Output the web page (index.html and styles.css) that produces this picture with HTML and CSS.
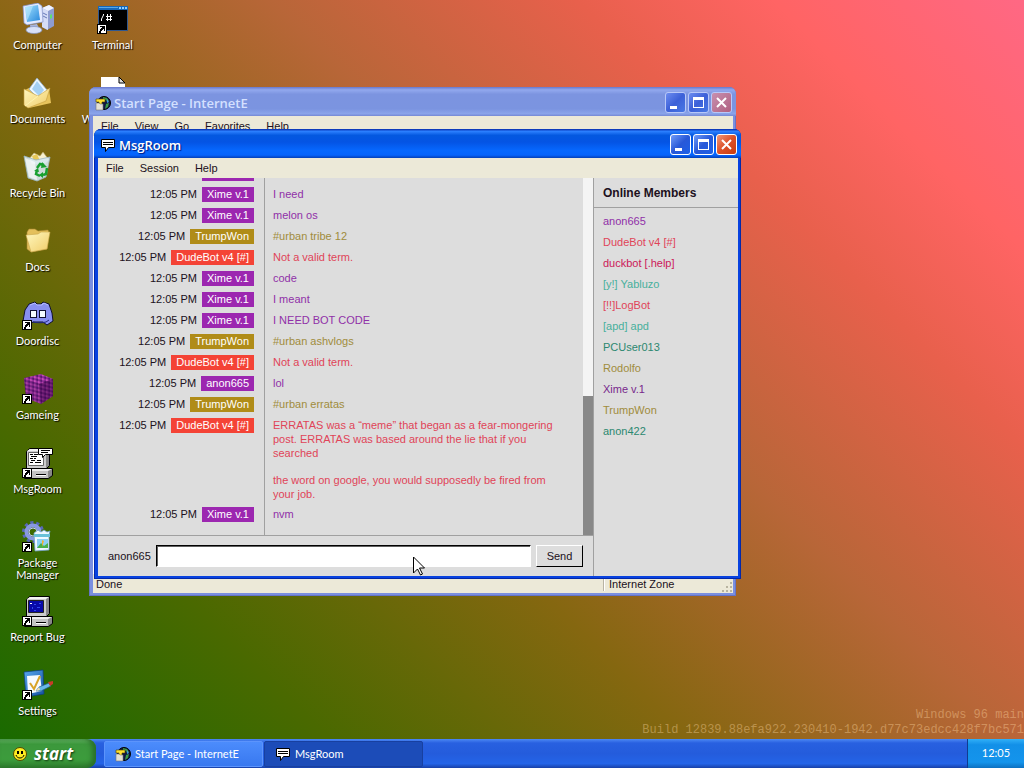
FILE: index.html
```html
<!DOCTYPE html>
<html lang="en">
<head>
  <meta charset="UTF-8" />
  <title>Windows 96</title>
  <meta name="viewport" content="width=device-width, initial-scale=1.0" />
  <link rel="stylesheet" href="styles.css">
</head>
<body>
  <svg class="sprites" aria-hidden="true">
    <defs>
      <linearGradient id="folder" x1="0" y1="0" x2="1" y2="1">
        <stop offset="0" stop-color="#fff8c0"/><stop offset="1" stop-color="#f0cc68"/>
      </linearGradient>
      <linearGradient id="screen" x1="0" y1="0" x2="1" y2="1">
        <stop offset="0" stop-color="#a5e4ff"/><stop offset="1" stop-color="#2888dc"/>
      </linearGradient>
      <linearGradient id="cover" x1="0" y1="0" x2="1" y2="1">
        <stop offset="0" stop-color="#58a8f0"/><stop offset="1" stop-color="#1450a0"/>
      </linearGradient>
      <pattern id="weave" width="4" height="4" patternUnits="userSpaceOnUse" patternTransform="skewY(14)">
        <rect width="4" height="4" fill="#902c98"/>
        <rect width="2" height="2" fill="#c84cb8"/><rect x="2" y="2" width="2" height="2" fill="#5c1870"/>
      </pattern>
      <symbol id="shortcut" viewBox="0 0 10 10">
        <path d="M0 0h10v10H0z" fill="#000"/><path d="M1 1h8v8H1z" fill="#fff"/>
        <path d="M3 2h5v5H7V5H6v1H5v1H4v2H2V7h1V5h1V4h1V3H3z" fill="#000"/>
      </symbol>
      <symbol id="chat" viewBox="0 0 16 16">
        <path d="M1.500 2.500h13v8h-6l-3 4v-4h-4z" fill="#fff" stroke="#000"/>
        <path d="M3 5h10v1H3zM3 7h10v1H3z" fill="#000"/>
      </symbol>
      <symbol id="globe" viewBox="0 0 16 16">
        <circle cx="9" cy="8" r="6.500" fill="#101840" stroke="#000"/>
        <path d="M8 2l4 1 2 3-2 1-1-2-3-1zM11 9l3-1-1 4-3 2z" fill="#3c9a48"/>
        <path d="M12 4l2 3-2 1z" fill="#4098e8"/>
        <path d="M1 4h9v3H7v4H4V7H1z" fill="#ffe030" stroke="#4a4000" stroke-width=".6"/>
        <path d="M1 8h3l1 1h3v6H1z" fill="#e4e0d4" stroke="#777" stroke-width=".6"/>
      </symbol>
      <symbol id="pc" viewBox="0 0 32 32">
        <path d="M4.500 4.500l3-3h20v17l-3 3h-20z" fill="#888" stroke="#000"/>
        <path d="M5 4l3-2h19l-3 2z" fill="#f4f4f4"/><path d="M5 4h19v17H5z" fill="#ccc"/>
        <path d="M2.500 24.500l4-3h24v7l-4 3h-24z" fill="#888" stroke="#000"/>
        <path d="M3 24l4-2h23l-4 2z" fill="#eee"/><path d="M3 24h23v7H3z" fill="#c4c4c4"/>
        <path d="M14 27h10v1H14z" fill="#000"/><path d="M14 28h10v1H14z" fill="#fff"/>
      </symbol>
    </defs>
  </svg>

  <div class="desktop">
    <ul class="icons">
      <li><a class="icon" href="#">
        <svg viewBox="0 0 32 32">
          <path d="M20 5l7-3 5 3v18l-7 4-5-3z" fill="#8e9cd0"/><path d="M20 5l6 3v19l-6-3z" fill="#d5dcf6"/>
          <path d="M20 5l7-3 5 3-6 3z" fill="#f2f4ff"/><path d="M21 10l4 2M21 13l4 2" stroke="#6678b8"/>
          <path d="M28 12l2-1v4l-2 1z" fill="#5fe070"/>
          <path d="M1 3l15-3 4 3 1 16-16 3-3-2z" fill="#e4eaff" stroke="#7c8cc4" stroke-width=".7"/>
          <path d="M3 4l13-2 2 15-13 2z" fill="url(#screen)"/><path d="M3 4l8-1-5 13-1 1z" fill="#c8f0ff" opacity=".5"/>
          <path d="M8 22l7-1 2 4-8 2z" fill="#a8b4dc"/><ellipse cx="12" cy="27" rx="8" ry="3.500" fill="#d8e0f8" stroke="#8090c0" stroke-width=".7"/>
        </svg><span>Computer</span></a></li>
      <li><a class="icon" href="#">
        <svg viewBox="0 0 32 32">
          <path d="M3 13l4-2 20 1 2 14-22 5-3-2z" fill="#e8c45c"/>
          <path d="M7 12L15 1l10 12-8 9z" fill="#eef8ff" stroke="#88a8cc" stroke-width=".7"/>
          <path d="M10 12l5-8 7 9-5 6z" fill="#a4d0f4"/>
          <path d="M2 12l14 7 12-8-4 13-18 7-4-3z" fill="url(#folder)" stroke="#c8a040" stroke-width=".6"/>
          <path d="M3 29l13-10" stroke="#fff4b0"/>
        </svg><span>Documents</span></a></li>
      <li><a class="icon" href="#">
        <svg viewBox="0 0 32 32">
          <path d="M7 8l5-6 6 3 3-4 6 8-5 5-12-1z" fill="#f6f0d0" stroke="#b8a868" stroke-width=".6"/>
          <path d="M10 5l5-2 3 7h-6z" fill="#e6c858"/>
          <path d="M2 5l12 4 14-3-4 20-9 4-9-3z" fill="#d6e8f0" fill-opacity=".9" stroke="#9cb8c4" stroke-width=".8"/>
          <path d="M3 7l10 4 2 18-8-3z" fill="#fff" opacity=".6"/>
          <g fill="none" stroke="#18a030" stroke-width="2.500"><path d="M15 17l3-4 4 1M25 17l-1 6-3 1M18 25l-4-2 1-4"/></g>
          <path d="M20 11l5 5-6 1zM21 21v6l-4-3zM12 20l4-3 1 4z" fill="#18a030"/>
        </svg><span>Recycle Bin</span></a></li>
      <li><a class="icon" href="#">
        <svg viewBox="0 0 32 32">
          <path d="M5 7l2-3 6 0 3 2 10-1 1 3-2 16-16 3-4-3z" fill="#e4c05c" stroke="#a88430" stroke-width=".6"/>
          <path d="M4 10l12-1 3-2 9 0-3 17-16 3z" fill="url(#folder)" stroke="#c8a448" stroke-width=".6"/>
        </svg><span>Docs</span></a></li>
      <li><a class="icon" href="#">
        <svg viewBox="0 0 32 32">
          <path d="M7 5l6-2 2 2h4l2-2 6 2 3 9 1 8-6 4-4-3H11l-4 3-6-4 2-11z" fill="#8890f0" stroke="#101030"/>
          <path d="M8 6l5-2 2 2h5l2-2 4 2" fill="none" stroke="#b4bcff"/>
          <path d="M8 11h7v8H8zM17 11h7v8h-7z" fill="#101030"/><path d="M9 12h5v6H9zM18 12h5v6h-5z" fill="#f4fcff"/>
          <path d="M11 23c4 1 9 1 13 0l3-2" fill="none" stroke="#202880"/>
          <use href="#shortcut" y="21" width="10" height="10"/>
        </svg><span>Doordisc</span></a></li>
      <li><a class="icon" href="#">
        <svg viewBox="0 0 32 32">
          <path d="M2 5l17-4 12 5v17l-12 8L4 25z" fill="url(#weave)"/>
          <path d="M2 5l15 6 2 20L4 25z" fill="#401058" opacity=".25"/><path d="M17 11l14-5v17l-12 8z" fill="#300040" opacity=".5"/>
          <use href="#shortcut" y="21" width="10" height="10"/>
        </svg><span>Gameing</span></a></li>
      <li><a class="icon" href="#">
        <svg viewBox="0 0 32 32">
          <use href="#pc" width="32" height="32"/>
          <path d="M6.500 5.500h15v13h-15z" fill="#fff" stroke="#666"/>
          <path d="M8 7.500h3M12 7.500h4M9 9.500h6M8 11.500h3M12 11.500h2M15 13.500h4M9 13.500h4M8 15.500h3M13 15.500h6" stroke="#000"/>
          <path d="M16.500 1.500h14v6h-7l-3 3v-3h-4z" fill="#fff" stroke="#000"/><path d="M19 3.500h9M19 5.500h7" stroke="#000"/>
          <use href="#shortcut" y="21" width="10" height="10"/>
        </svg><span>MsgRoom</span></a></li>
      <li><a class="icon" href="#">
        <svg viewBox="0 0 32 32">
          <circle cx="11" cy="11" r="9" fill="none" stroke="#5868b8" stroke-width="4" stroke-dasharray="3 2.650"/>
          <circle cx="11" cy="11" r="6.500" fill="none" stroke="#8898e0" stroke-width="4"/>
          <circle cx="11" cy="11" r="4" fill="none" stroke="#c0c8f4" stroke-width="1"/>
          <path d="M12 12l4-3 3 2 3-2 3 2 3-1-1 4v15l-14 1z" fill="#eef8ff" stroke="#70a0c8" stroke-width=".8"/>
          <path d="M12 13h16v3H12z" fill="#68c0d8"/><path d="M15 18h11v9H15z" fill="#8ad0f4"/>
          <path d="M15 27l4-5 3 3 4-3v5z" fill="#48b048"/><path d="M20 19l2 1-2 6z" fill="#f0b030"/>
          <use href="#shortcut" y="21" width="10" height="10"/>
        </svg><span>Package Manager</span></a></li>
      <li><a class="icon" href="#">
        <svg viewBox="0 0 32 32">
          <use href="#pc" width="32" height="32"/>
          <path d="M6.500 5.500h15v12h-15z" fill="#0808a8" stroke="#222"/>
          <path d="M12 9h2v1h-2zM17 8h2v1h-2zM10 12h1v2h-1zM15 12h3v1h-3zM12 15h2v1h-2z" fill="#3048f0"/>
          <path d="M8 8h2v1H8z" fill="#fff"/>
          <use href="#shortcut" y="21" width="10" height="10"/>
        </svg><span>Report Bug</span></a></li>
      <li><a class="icon" href="#">
        <svg viewBox="0 0 32 32">
          <path d="M2 3l19-2 1 24-18 3z" fill="url(#cover)" stroke="#0c3c80" stroke-width=".7"/>
          <path d="M5 7l13-1 2 16-14 3z" fill="#f6faff"/>
          <path d="M8 14l4 6 6-13" fill="none" stroke="#d8a428" stroke-width="2"/>
          <path d="M14 22l3-4 10-4 2 3-10 5z" fill="#68b8e8" stroke="#205888" stroke-width=".7"/>
          <path d="M26 13l5-1v3l-3 2z" fill="#c83c28"/><path d="M14 22l3-4 1 3z" fill="#f4e0a8"/>
          <use href="#shortcut" y="21" width="10" height="10"/>
        </svg><span>Settings</span></a></li>
      <li><a class="icon" href="#">
        <svg viewBox="0 0 32 32">
          <path d="M1.500 3.500h29v24h-29z" fill="#000" stroke="#305890"/><path d="M1 3h30v4H1z" fill="#1868b8"/>
          <path d="M2 4h19v1H2z" fill="#58a8e8"/><path d="M22 4h2v2h-2zM25 4h2v2h-2zM28 4h2v2h-2z" fill="#90d0ff"/>
          <path d="M4.500 18v-2l1-2 1-2v-1M10.500 11v7M13.500 11v7M9 13.500h6M9 16.500h6" fill="none" stroke="#fff"/>
          <use href="#shortcut" y="21" width="10" height="10"/>
        </svg><span>Terminal</span></a></li>
      <li><a class="icon" href="#">
        <svg viewBox="0 0 32 32">
          <path d="M4 0h18l6 6v26H4z" fill="#fff"/><path d="M22 0v6h6z" fill="#ddd" stroke="#000"/>
        </svg><span>Welcome.txt</span></a></li>
    </ul>

    <p class="build">Windows 96 main<br>Build 12839.88efa922.230410-1942.d77c73edcc428f7bc571</p>

    <section class="window browser">
      <header class="titlebar">
        <svg class="app-icon"><use href="#globe"/></svg>
        <h2>Start Page - InternetE</h2>
        <button class="control" aria-label="Minimize"><svg viewBox="0 0 19 19"><path d="M4 13h7v3H4z"/></svg></button>
        <button class="control" aria-label="Maximize"><svg viewBox="0 0 19 19"><path fill-rule="evenodd" d="M4 4h11v11H4zM5 7v7h9V7z"/></svg></button>
        <button class="control close" aria-label="Close"><svg viewBox="0 0 19 19"><path d="M5 5l9 9M14 5l-9 9"/></svg></button>
      </header>
      <nav class="menu">
        <button>File</button><button>View</button><button>Go</button><button>Favorites</button><button>Help</button>
      </nav>
      <div class="page"></div>
      <footer class="status"><span>Done</span><span class="zone">Internet Zone</span>
        <svg class="grip" viewBox="0 0 12 12"><path d="M9 1h2v2H9zM5 5h2v2H5zM9 5h2v2H9zM1 9h2v2H1zM5 9h2v2H5zM9 9h2v2H9z"/></svg>
      </footer>
    </section>

    <section class="window msgroom active">
      <header class="titlebar">
        <svg class="app-icon"><use href="#chat"/></svg>
        <h2>MsgRoom</h2>
        <button class="control" aria-label="Minimize"><svg viewBox="0 0 19 19"><path d="M4 13h7v3H4z"/></svg></button>
        <button class="control" aria-label="Maximize"><svg viewBox="0 0 19 19"><path fill-rule="evenodd" d="M4 4h11v11H4zM5 7v7h9V7z"/></svg></button>
        <button class="control close" aria-label="Close"><svg viewBox="0 0 19 19"><path d="M5 5l9 9M14 5l-9 9"/></svg></button>
      </header>
      <nav class="menu">
        <button>File</button><button>Session</button><button>Help</button>
      </nav>
      <div class="room">
        <div class="chat">
          <div class="history">
            <ul class="messages">
              <li class="purple"><div class="author"><b>Xime v.1</b></div></li>
              <li class="purple"><div class="author"><time>12:05 PM</time><b>Xime v.1</b></div><div class="text">I need</div></li>
              <li class="purple"><div class="author"><time>12:05 PM</time><b>Xime v.1</b></div><div class="text">melon os</div></li>
              <li class="gold"><div class="author"><time>12:05 PM</time><b>TrumpWon</b></div><div class="text">#urban tribe 12</div></li>
              <li class="red"><div class="author"><time>12:05 PM</time><b>DudeBot v4 [#]</b></div><div class="text">Not a valid term.</div></li>
              <li class="purple"><div class="author"><time>12:05 PM</time><b>Xime v.1</b></div><div class="text">code</div></li>
              <li class="purple"><div class="author"><time>12:05 PM</time><b>Xime v.1</b></div><div class="text">I meant</div></li>
              <li class="purple"><div class="author"><time>12:05 PM</time><b>Xime v.1</b></div><div class="text">I NEED BOT CODE</div></li>
              <li class="gold"><div class="author"><time>12:05 PM</time><b>TrumpWon</b></div><div class="text">#urban ashvlogs</div></li>
              <li class="red"><div class="author"><time>12:05 PM</time><b>DudeBot v4 [#]</b></div><div class="text">Not a valid term.</div></li>
              <li class="purple"><div class="author"><time>12:05 PM</time><b>anon665</b></div><div class="text">lol</div></li>
              <li class="gold"><div class="author"><time>12:05 PM</time><b>TrumpWon</b></div><div class="text">#urban erratas</div></li>
              <li class="red"><div class="author"><time>12:05 PM</time><b>DudeBot v4 [#]</b></div><div class="text"><p>ERRATAS was a “meme” that began as a fear-mongering post. ERRATAS was based around the lie that if you searched</p><p>the word on google, you would supposedly be fired from your job.</p></div></li>
              <li class="purple"><div class="author"><time>12:05 PM</time><b>Xime v.1</b></div><div class="text">nvm</div></li>
            </ul>
            <div class="scrollbar"><div class="thumb"></div></div>
          </div>
          <form class="composer">
            <label for="message">anon665</label>
            <input id="message" type="text" autocomplete="off">
            <button type="button">Send</button>
          </form>
        </div>
        <aside class="members">
          <h3>Online Members</h3>
          <ul>
            <li class="purple">anon665</li>
            <li class="red">DudeBot v4 [#]</li>
            <li class="crimson">duckbot [.help]</li>
            <li class="teal">[y!] Yabluzo</li>
            <li class="red">[!!]LogBot</li>
            <li class="teal">[apd] apd</li>
            <li class="green">PCUser013</li>
            <li class="gold">Rodolfo</li>
            <li class="violet">Xime v.1</li>
            <li class="gold">TrumpWon</li>
            <li class="green">anon422</li>
          </ul>
        </aside>
      </div>
    </section>
  </div>

  <footer class="taskbar">
    <button class="start">
      <svg viewBox="0 0 14 14"><circle cx="7" cy="7" r="6.500" fill="#ffee20" stroke="#504800"/><path d="M4 4h2v3H4zM8 4h2v3H8z"/><path d="M3 8c1 4 7 4 8 0" fill="none" stroke="#000"/></svg>
      start
    </button>
    <button class="task"><svg class="app-icon"><use href="#globe"/></svg>Start Page - InternetE</button>
    <button class="task current"><svg class="app-icon"><use href="#chat"/></svg>MsgRoom</button>
    <time class="clock">12:05</time>
  </footer>

  <svg class="cursor" viewBox="0 0 12 20"><path d="M.5 1v16l4-4 3 6 2-1-3-6h5z" fill="#fff" stroke="#000"/></svg>
</body>
</html>
```

FILE: styles.css
```css
:root {
  --face: #ece9d8;
  --panel: #dddddd;
  --ui: "Liberation Sans", Arial, sans-serif;
  --title: "Open Sans", sans-serif;
  --label: Lato, sans-serif;
}

* {
  box-sizing: border-box;
}

body {
  margin: 0;
  height: 100vh;
  display: flex;
  flex-direction: column;
  overflow: hidden;
  font: 11px/14px var(--ui);
  color: #201020;
  background: linear-gradient(45deg, #156a00 0%, #4a6900 20%, #856710 40%, #b86638 58%, #e8604c 75%, #ff6464 86%, #ff6884 100%);
}

ul, p, h2, h3 {
  margin: 0;
  padding: 0;
  list-style: none;
}

button, input {
  font: inherit;
  color: inherit;
}

.sprites {
  position: absolute;
  width: 0;
  height: 0;
}

.desktop {
  flex: 1;
  min-height: 0;
  position: relative;
}

/* desktop icons */

.icons {
  display: grid;
  grid-auto-flow: column;
  grid-template-rows: repeat(10, 74px);
  grid-auto-columns: 75px;
}

.icon {
  display: flex;
  flex-direction: column;
  align-items: center;
  gap: 4px;
  padding: 3px 4px 0;
  font: 11px/12px var(--label);
  color: #fff;
  text-align: center;
  text-decoration: none;
  text-shadow: 1px 1px 1px #000;
}

.icon svg {
  width: 32px;
  height: 32px;
}

.build {
  position: absolute;
  right: 0;
  bottom: 1px;
  font: 12px/15px "Liberation Mono", monospace;
  text-align: right;
  color: rgba(255, 215, 160, 0.4);
}

/* windows */

.window {
  position: absolute;
  display: flex;
  flex-direction: column;
  padding: 0 3px 3px 4px;
  border-radius: 7px 7px 0 0;
  background: #7a8fe0;
  box-shadow: inset 0 0 0 1px #6474c8;
}

.window.active {
  background: #0842e0;
  box-shadow: inset 0 0 0 1px #0428a8;
}

.browser {
  left: 89px;
  top: 87px;
  width: 647px;
  height: 509px;
}

.msgroom {
  left: 94px;
  top: 129px;
  width: 647px;
  height: 450px;
}

.titlebar {
  flex: none;
  display: flex;
  align-items: center;
  gap: 2px;
  height: 29px;
  margin: 0 -3px 0 -4px;
  padding: 2px 4px 0 6px;
  border-radius: 7px 7px 0 0;
  background: linear-gradient(#6878cc, #92a8ee 10%, #7c94e0 25%, #7b94e0 75%, #8aa4ea 92%, #7488d4);
  color: #d4e0ff;
}

.active .titlebar {
  background: linear-gradient(#0428a8, #2c80ff 8%, #0458e0 22%, #0454e4 45%, #0668ff 75%, #0664fc 90%, #0440b8);
  color: #fff;
}

.titlebar h2 {
  flex: 1;
  margin-left: 1px;
  font: 600 13px/18px var(--title);
}

.active h2 {
  text-shadow: 1px 1px 1px #001880;
}

.app-icon {
  flex: none;
  width: 16px;
  height: 16px;
}

.control {
  width: 21px;
  height: 21px;
  padding: 0;
  border: 1px solid #b8c8f8;
  border-radius: 3px;
  background: linear-gradient(135deg, #6c8cf0, #3c60d8 50%, #4878e4);
}

.control svg {
  display: block;
  fill: #fff;
}

.close {
  background: linear-gradient(135deg, #c890b0, #b06080);
}

.close path {
  stroke: #fff;
  stroke-width: 2;
}

.active .control {
  border-color: #fff;
  background: linear-gradient(135deg, #709cf8, #2858d8 50%, #1c60e8);
}

.active .close {
  background: linear-gradient(135deg, #f09878, #dc5028 50%, #c83c10);
}

.menu {
  flex: none;
  display: flex;
  height: 20px;
  background: var(--face);
}

.menu button {
  padding: 0 8px;
  border: 0;
  background: none;
}

.page {
  flex: 1;
  background: #fff;
}

.status {
  display: flex;
  align-items: center;
  height: 19px;
  padding-left: 3px;
  background: var(--face);
}

.status span {
  flex: 1;
}

.status .zone {
  flex: 0 0 117px;
  padding-left: 4px;
  border-left: 1px solid #fff;
  box-shadow: -1px 0 #b8b4a4;
}

.grip {
  width: 12px;
  height: 12px;
  align-self: flex-end;
  fill: #b8b4a0;
}

/* chat room */

.room {
  flex: 1;
  min-height: 0;
  display: flex;
  background: var(--panel);
}

.chat {
  flex: 1;
  display: flex;
  flex-direction: column;
}

.history {
  flex: 1;
  min-height: 0;
  display: flex;
}

.messages {
  flex: 1;
  display: flex;
  flex-direction: column;
  justify-content: flex-end;
  overflow: hidden;
  padding-bottom: 10px;
  background: linear-gradient(#a0a0a0, #a0a0a0) 166px 0 / 1px 100% no-repeat;
}

.messages li {
  flex: none;
  display: grid;
  grid-template-columns: 166px 1fr;
  padding: 3px 0;
}

.author {
  display: flex;
  align-items: flex-start;
  justify-content: flex-end;
  gap: 5px;
  padding-right: 10px;
  line-height: 15px;
}

.author b {
  padding: 0 5px;
  font-weight: normal;
  color: #fff;
}

.text {
  padding: 0 16px 0 9px;
}

.text p + p {
  margin-top: 13px;
}

.purple .text, .members .purple { color: #9030a8; }
.gold .text, .members .gold { color: #a08c3c; }
.red .text, .members .red { color: #e04458; }
.members .crimson { color: #cc1858; }
.members .teal { color: #48b09c; }
.members .green { color: #2c8870; }
.members .violet { color: #78288c; }

.purple b { background: #9c27b0; }
.gold b { background: #b08c18; }
.red b { background: #f44336; }

.scrollbar {
  width: 10px;
  display: flex;
  align-items: flex-end;
  background: #f4f4f4;
}

.thumb {
  width: 100%;
  height: 39%;
  background: #888;
}

.composer {
  display: flex;
  align-items: center;
  gap: 5px;
  padding: 9px 10px;
  border-top: 1px solid #a0a0a0;
}

.composer input {
  flex: 1;
  min-width: 0;
  height: 22px;
  padding: 0 4px;
  border: 1px solid #fff;
  border-top-color: #000;
  border-left-color: #000;
  box-shadow: inset 1px 1px #606060;
  background: #fff;
}

.composer button {
  width: 47px;
  height: 22px;
  padding: 0;
  border: 1px solid #000;
  border-top-color: #fff;
  border-left-color: #fff;
  background: var(--panel);
}

.members {
  width: 145px;
  border-left: 1px solid #a0a0a0;
}

.members h3 {
  padding: 8px 9px 7px;
  border-bottom: 1px solid #a0a0a0;
  font: bold 12px/14px var(--ui);
}

.members ul {
  padding: 3px 9px;
}

.members li {
  line-height: 21px;
}

/* taskbar */

.taskbar {
  flex: none;
  display: flex;
  height: 29px;
  background: linear-gradient(#4c88f4, #2860e0 14%, #245cdc 50%, #2464e8 85%, #1840a8);
  color: #fff;
  font: 11px/14px var(--label);
}

.start {
  display: flex;
  align-items: center;
  gap: 7px;
  width: 96px;
  margin-right: 8px;
  padding: 0 0 0 13px;
  border: 0;
  border-radius: 0 9px 9px 0;
  background: linear-gradient(#68b868, #3c983c 18%, #3c9c3c 70%, #2c7c2c);
  box-shadow: inset -4px 0 5px #2a702a;
  font: italic bold 17px/20px var(--title);
  text-shadow: 1px 1px 2px #103810;
}

.start svg {
  width: 14px;
  height: 14px;
}

.task {
  display: flex;
  align-items: center;
  gap: 4px;
  width: 159px;
  margin: 2px 1px 1px 0;
  padding: 0 10px;
  border: 1px solid #5c94fc;
  border-radius: 2px;
  background: linear-gradient(#4c8cfc, #3878f0);
}

.task.current {
  border-color: #1840a0;
  background: #1c4cb8;
}

.clock {
  width: 57px;
  margin-left: auto;
  line-height: 28px;
  text-align: center;
  border-left: 1px solid #103c90;
  background: linear-gradient(#30b0f8, #1290e8 20%, #1494ec 80%, #0c70c0);
}

.cursor {
  position: absolute;
  left: 413px;
  top: 556px;
  width: 12px;
  height: 20px;
}
```
